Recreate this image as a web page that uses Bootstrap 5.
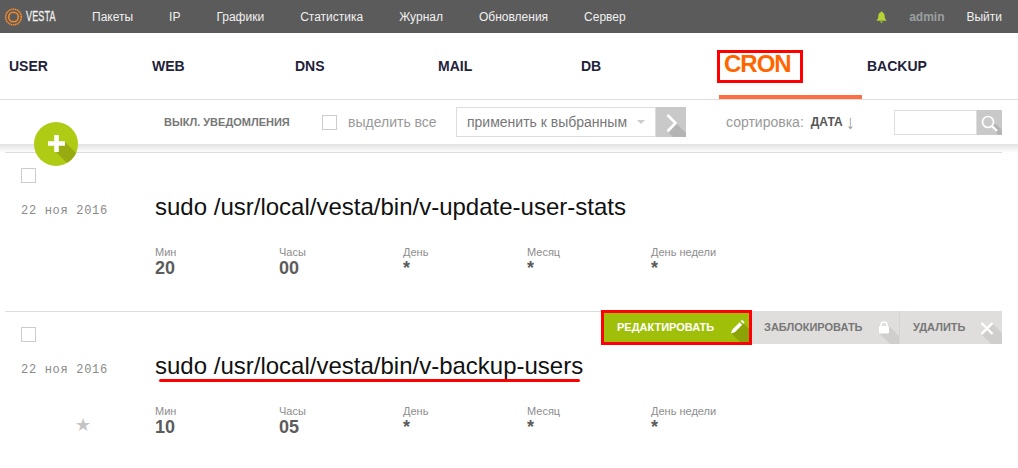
<!DOCTYPE html>
<html lang="ru"><head><meta charset="utf-8">
<link href="https://cdn.jsdelivr.net/npm/bootstrap@5.3.0/dist/css/bootstrap.min.css" rel="stylesheet">
<style>
html,body{height:468px;overflow:hidden}
body{font-family:"Liberation Sans",Arial,sans-serif;background:#fff;color:#555;position:relative}
.topbar{height:33px;background:#5b5b5b;color:#fff;font-size:12px}
.brand{width:92px;padding-left:4px}
.brandname{font-size:15px;transform:scaleX(.6);transform-origin:left;color:#f2f2f2;margin-left:2px;width:40px;letter-spacing:.3px;-webkit-text-stroke:.3px #f2f2f2}
.topitem{color:#f0f0f0;text-decoration:none;margin-right:36px}
.topuser{color:#9aa0a0;font-weight:700;margin:0 22px 0 0}
.bell{margin-right:22px}
.tabsrow{height:67px;border-bottom:1px solid #ddd}
.tabitem{width:143px;height:66px;font-size:14px;font-weight:700;color:#22223a;padding-left:9px;position:relative}
.tabactive{color:#ff6600;font-size:24px;letter-spacing:-1px;margin-left:4px;margin-right:-4px;padding-left:5px;border-bottom:4px solid #ff6e42;height:66px}
.cronbox{border:3px solid #f00;position:absolute;left:-2px;top:17px;width:86px;height:33px}
.toolbar{height:44px;padding-top:7px;font-size:14px;color:#8d8d8d}
.shadowband{height:8px;background:linear-gradient(#e2e2e2,#f6f6f6 80%,#fff)}
.offnote{font-size:11px;font-weight:700;color:#777;margin-left:164px;width:158px}
.chk{width:15px;height:15px;border:1px solid #ccc;background:#fff;display:block}
.selall{margin-left:11px;width:108px;color:#999}
.selectbox{width:200px;height:30px;border:1px solid #ddd;color:#777;padding-left:10px;font-size:14px}
.caretmark{width:0;height:0;border:4px solid transparent;border-top:4px solid #ccc;margin:4px 10px 0 auto}
.gobtn{width:30px;height:30px;background:#c9c9c9;overflow:hidden}
.sortlabel{margin-left:40px;color:#999}
.sortval{color:#555;font-size:12px;font-weight:700;margin-left:7px}
.sortarrow{color:#999;margin-left:3px;width:48px;font-size:19px;line-height:1;font-weight:400}
.searchbox{width:83px;height:25px;border:1px solid #ddd}
.searchbtn{width:25px;height:25px;background:#c9c9c9}
.sheet{margin:0 16px 0 5px}
.entry{border-top:1px solid #ddd;height:159px;position:relative;padding-left:16px}
.entry .chk{margin-top:15px}
.datecol{width:134px;font-family:"Liberation Mono",monospace;font-size:12px;color:#8a8a8a;padding-top:19px;letter-spacing:.7px}
.cmd{font-size:24px;color:#111;line-height:28px;padding-top:10px}
.fields{margin-top:25px}
.fieldcell{width:124px}
.fieldname{font-size:11px;color:#8d8d8d;line-height:13px}
.fieldval{font-size:18px;font-weight:700;color:#5c5c5c;line-height:17px;margin-top:1px}
.actions{position:absolute;right:0;top:-1px;height:33px;font-size:11px;font-weight:700}
.act{height:33px;background:#dfdedd;color:#777;padding-left:12px;position:relative;border-right:1px solid #d3d3d3}
.acttxt{margin-right:auto}
.actedit{background:#9fbf09;color:#fff;width:148px;padding-left:13px;border:none}
.editbox{border:3px solid #f00;position:absolute;left:-3px;top:-1px;width:151px;height:35px}
.actlock{width:148px}.actdel{width:102px;border:none;padding-left:13px}
.fold{position:absolute;right:0;bottom:0}
.redline{position:absolute;left:159px;top:379px;width:421px;height:3px;background:#f00;border-radius:2px}
.fab{position:absolute;left:34px;top:122px;width:44px;height:44px;border-radius:50%;background:#afcb14;overflow:hidden}
.star{position:absolute;left:70px;top:104px;color:#c4c4c4;font-size:18px;line-height:1}
</style></head><body>
<div class="topbar d-flex align-items-center">
 <div class="brand d-flex align-items-center">
  <svg width="20" height="20" viewBox="0 0 20 20"><circle cx="9.500" cy="10" r="7.800" fill="none" stroke="#f58a2c" stroke-width="1.600" stroke-dasharray="1.400 .5"/><circle cx="9.500" cy="10" r="4.800" fill="none" stroke="#f58a2c" stroke-width="1.600"/></svg>
  <span class="brandname">VESTA</span>
 </div>
 <a class="topitem" href="#">Пакеты</a><a class="topitem" href="#">IP</a><a class="topitem" href="#">Графики</a><a class="topitem" href="#">Статистика</a><a class="topitem" href="#">Журнал</a><a class="topitem" href="#">Обновления</a><a class="topitem" href="#">Сервер</a>
 <div class="ms-auto d-flex align-items-center">
  <svg class="bell" width="11" height="12" viewBox="0 0 11 12"><path d="M5.5 0.5c.7 0 1 .4 1 1 1.700.5 2.200 2 2.200 3.700 0 2 .6 3 1.600 3.800v.8H.7V9c1-.8 1.600-1.800 1.600-3.800 0-1.700.5-3.200 2.200-3.700 0-.6.3-1 1-1zM4.200 10.500h2.600a1.300 1.300 0 0 1-2.600 0z" fill="#b5d334"/></svg>
  <span class="topuser">admin</span><a class="topitem me-3" href="#">Выйти</a>
 </div>
</div>
<div class="tabsrow d-flex">
 <div class="tabitem d-flex align-items-center">USER</div>
 <div class="tabitem d-flex align-items-center">WEB</div>
 <div class="tabitem d-flex align-items-center">DNS</div>
 <div class="tabitem d-flex align-items-center">MAIL</div>
 <div class="tabitem d-flex align-items-center">DB</div>
 <div class="tabitem tabactive d-flex align-items-center">CRON<span class="cronbox"></span></div>
 <div class="tabitem d-flex align-items-center">BACKUP</div>
</div>
<div class="toolbar d-flex align-items-start">
 <div class="offnote d-flex align-items-center" style="height:30px">ВЫКЛ. УВЕДОМЛЕНИЯ</div>
 <div class="d-flex align-items-center" style="height:30px"><span class="chk"></span><span class="selall">выделить все</span></div>
 <div class="selectbox d-flex align-items-center">применить к выбранным<span class="caretmark"></span></div>
 <div class="gobtn"><svg width="30" height="30" viewBox="0 0 30 30"><path d="M11 24L20 16L30 26V30H17z" fill="#b4b4b4"/><path d="M11.500 8l8 8-8 8.500" fill="none" stroke="#fff" stroke-width="2.600"/></svg></div>
 <div class="d-flex align-items-center" style="height:30px"><span class="sortlabel">сортировка:</span><span class="sortval">ДАТА</span><span class="sortarrow">↓</span></div>
 <div class="d-flex" style="margin-top:3px"><div class="searchbox"></div><div class="searchbtn"><svg width="25" height="25" viewBox="0 0 25 25"><path d="M15 16L19 14L25 20V25H21z" fill="#b4b4b4"/><circle cx="11" cy="12" r="5.500" fill="none" stroke="#fff" stroke-width="1.600"/><path d="M15 16l5 5" stroke="#fff" stroke-width="2.200"/></svg></div></div>
</div>
<div class="shadowband"></div>
<div class="sheet">
 <div class="entry">
  <span class="chk"></span>
  <div class="d-flex">
   <div class="datecol">22 ноя 2016</div>
   <div>
    <div class="cmd">sudo /usr/local/vesta/bin/v-update-user-stats</div>
    <div class="fields d-flex">
     <div class="fieldcell"><div class="fieldname">Мин</div><div class="fieldval">20</div></div>
     <div class="fieldcell"><div class="fieldname">Часы</div><div class="fieldval">00</div></div>
     <div class="fieldcell"><div class="fieldname">День</div><div class="fieldval">*</div></div>
     <div class="fieldcell"><div class="fieldname">Месяц</div><div class="fieldval">*</div></div>
     <div class="fieldcell"><div class="fieldname">День недели</div><div class="fieldval">*</div></div>
    </div>
   </div>
  </div>
 </div>
 <div class="entry">
  <div class="actions d-flex">
   <div class="act actedit d-flex align-items-center"><span class="acttxt">РЕДАКТИРОВАТЬ</span>
    <svg class="fold" width="33" height="33" viewBox="0 0 33 33"><path d="M12 22L23 11L33 21V33H23z" fill="#8ba307"/><path d="M12 22.500l1.200-3.800 7.500-7.500 2.600 2.600-7.500 7.500zM21.700 10.200l1.400-1.400 2.600 2.600-1.400 1.400z" fill="#fff"/></svg><span class="editbox"></span></div>
   <div class="act actlock d-flex align-items-center"><span class="acttxt">ЗАБЛОКИРОВАТЬ</span>
    <svg class="fold" width="33" height="33" viewBox="0 0 33 33"><path d="M13 22L22 14L33 25V33H24z" fill="#cfcecd"/><rect x="13" y="15" width="10" height="7.500" rx="1" fill="#fff"/><path d="M15 15.500v-1.500a3 3 0 0 1 6 0v1.500" fill="none" stroke="#fff" stroke-width="1.700"/></svg></div>
   <div class="act actdel d-flex align-items-center"><span class="acttxt">УДАЛИТЬ</span>
    <svg class="fold" width="33" height="33" viewBox="0 0 33 33"><path d="M13 24L24 13L33 22V33H22z" fill="#cfcecd"/><path d="M12.500 12l11 11M23.500 12l-11 11" stroke="#fff" stroke-width="2.400"/></svg></div>
  </div>
  <span class="chk"></span>
  <div class="d-flex">
   <div class="datecol">22 ноя 2016</div>
   <div>
    <div class="cmd">sudo /usr/local/vesta/bin/v-backup-users</div>
    <div class="fields d-flex">
     <div class="fieldcell"><div class="fieldname">Мин</div><div class="fieldval">10</div></div>
     <div class="fieldcell"><div class="fieldname">Часы</div><div class="fieldval">05</div></div>
     <div class="fieldcell"><div class="fieldname">День</div><div class="fieldval">*</div></div>
     <div class="fieldcell"><div class="fieldname">Месяц</div><div class="fieldval">*</div></div>
     <div class="fieldcell"><div class="fieldname">День недели</div><div class="fieldval">*</div></div>
    </div>
   </div>
  </div>
  <span class="star">★</span>
 </div>
</div>
<div class="redline"></div>
<div class="fab"><svg width="44" height="44" viewBox="0 0 44 44"><path d="M20 28L30 19L44 33V44H36z" fill="#98ab10"/><path d="M22.500 13v17M14 21.500h17" stroke="#fff" stroke-width="4.600"/></svg></div>
<script src="https://cdn.jsdelivr.net/npm/bootstrap@5.3.0/dist/js/bootstrap.bundle.min.js"></script>
</body></html>
